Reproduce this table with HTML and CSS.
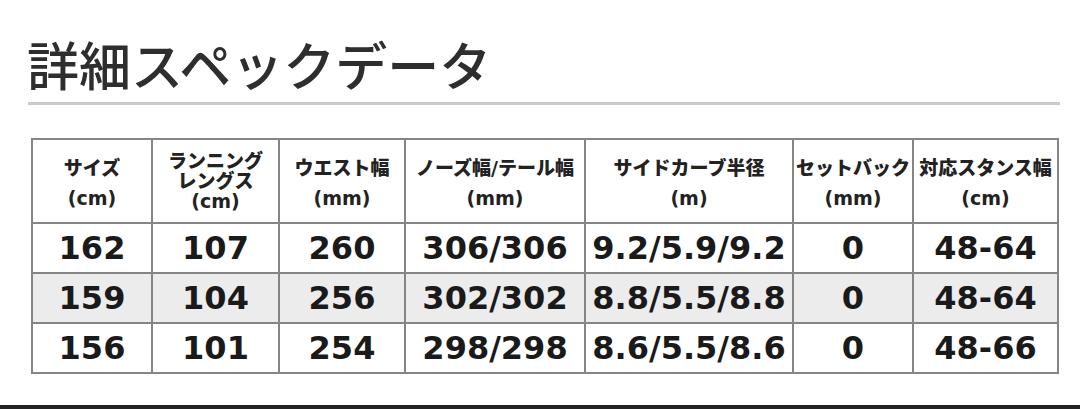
FILE: index.html
```html
<!DOCTYPE html>
<html lang="ja">
<head>
<meta charset="utf-8">
<link rel="stylesheet" href="styles.css">
</head>
<body>
<div class="page">
  <h1 class="title">詳細スペックデータ</h1>
  <div class="rule"></div>
  <table class="spec">
    <colgroup>
      <col style="width:120px"><col style="width:127px"><col style="width:126px"><col style="width:180px"><col style="width:208px"><col style="width:120px"><col style="width:145px">
    </colgroup>
    <thead>
      <tr>
        <th><div class="h"><span>サイズ</span><span>(cm)</span></div></th>
        <th><div class="h h3"><span>ランニング</span><span>レングス</span><span>(cm)</span></div></th>
        <th><div class="h"><span>ウエスト幅</span><span>(mm)</span></div></th>
        <th><div class="h"><span>ノーズ幅/テール幅</span><span>(mm)</span></div></th>
        <th><div class="h"><span>サイドカーブ半径</span><span>(m)</span></div></th>
        <th><div class="h"><span>セットバック</span><span>(mm)</span></div></th>
        <th><div class="h"><span>対応スタンス幅</span><span>(cm)</span></div></th>
      </tr>
    </thead>
    <tbody>
      <tr><td>162</td><td>107</td><td>260</td><td>306/306</td><td>9.2/5.9/9.2</td><td>0</td><td>48-64</td></tr>
      <tr class="alt"><td>159</td><td>104</td><td>256</td><td>302/302</td><td>8.8/5.5/8.8</td><td>0</td><td>48-64</td></tr>
      <tr><td>156</td><td>101</td><td>254</td><td>298/298</td><td>8.6/5.5/8.6</td><td>0</td><td>48-66</td></tr>
    </tbody>
  </table>
  <div class="bar"></div>
</div>
</body>
</html>
```

FILE: styles.css
```css
html, body {
  margin: 0;
  padding: 0;
  background: #ffffff;
}
.page {
  width: 1080px;
  height: 409px;
  display: flex;
  flex-direction: column;
  overflow: hidden;
}
.title {
  margin: 32px 0 0 27px;
  font-family: "Noto Sans CJK JP", sans-serif;
  font-weight: 500;
  font-size: 52px;
  line-height: 64px;
  color: #2e2e2e;
  letter-spacing: 0;
}
.rule {
  margin: 6px 20px 0 28px;
  height: 3px;
  background: #c9c9c9;
}
.spec {
  margin: 33px 0 0 31px;
  width: 1026px;
  border-collapse: collapse;
  table-layout: fixed;
  font-family: "DejaVu Sans", "Noto Sans CJK JP", sans-serif;
  font-weight: bold;
  color: #1a1a1a;
}
.spec th, .spec td {
  border: 2px solid #858585;
  text-align: center;
  padding: 0;
  white-space: nowrap;
}
.spec th {
  height: 82px;
  font-size: 19px;
  font-weight: 900;
  color: #222;
}
.h {
  display: flex;
  flex-direction: column;
  align-items: center;
  line-height: 30px;
  padding-top: 4px;
}
.h3 {
  line-height: 20px;
  padding-top: 0;
}
.spec td {
  height: 48px;
  font-size: 32px;
  line-height: 48px;
  letter-spacing: 0;
}
.spec tr.alt td {
  background: #ececec;
}
.bar {
  margin-top: auto;
  height: 4px;
  background: #222;
}
```
